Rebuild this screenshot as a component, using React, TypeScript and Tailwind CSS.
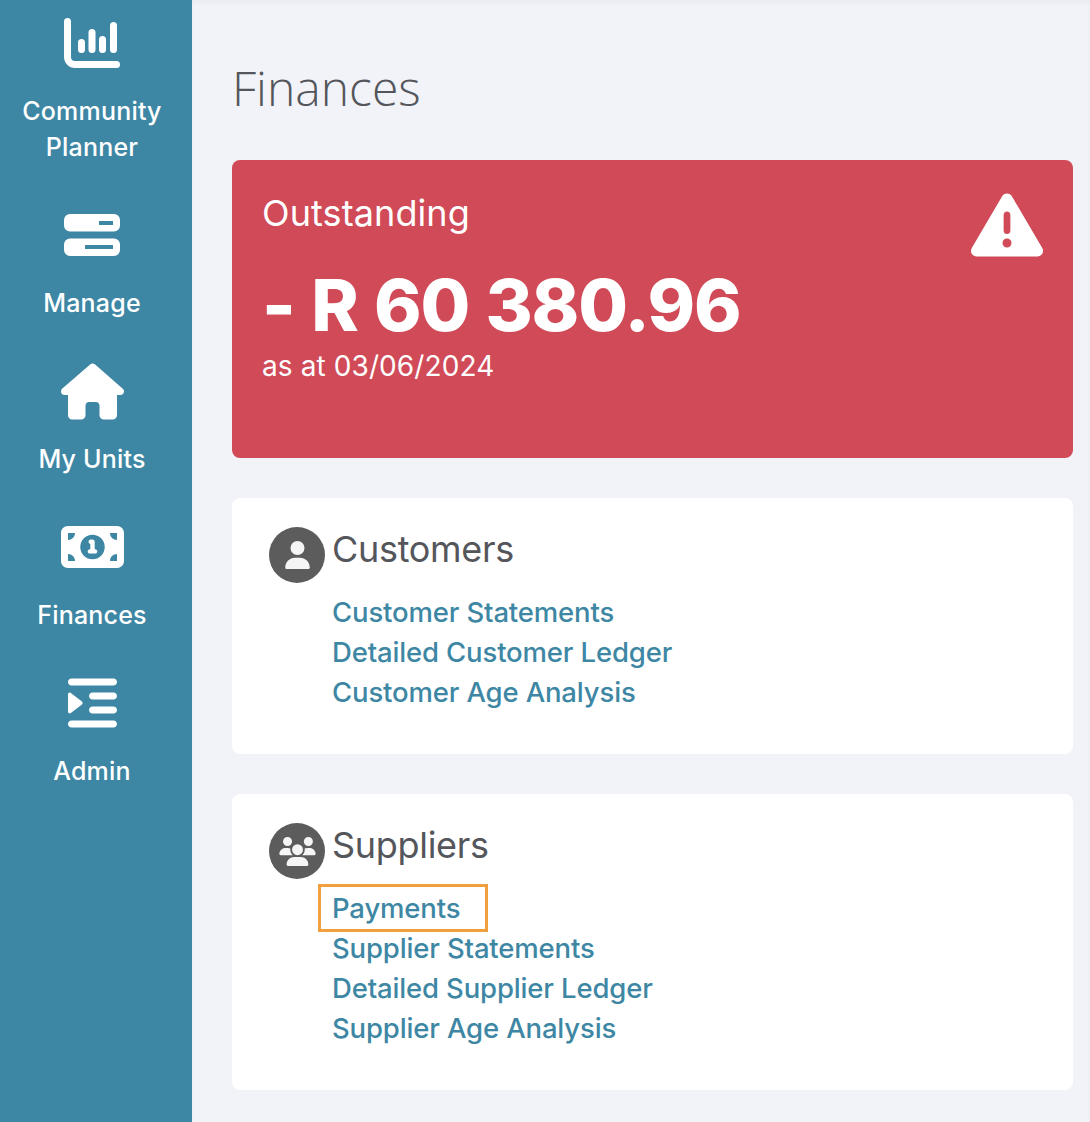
import { FaHouse, FaMoneyBill1, FaIndent, FaTriangleExclamation, FaUser, FaUsers } from "react-icons/fa6";
import type { ReactNode } from "react";

const F = { fontFamily: "Inter, 'Liberation Sans', sans-serif" };

function ChartIcon() {
  return (
    <svg width="56" height="50" viewBox="0 0 56 50" fill="white">
      <path d="M0 3.5a3.5 3.5 0 0 1 7 0V39a4 4 0 0 0 4 4h41.5a3.5 3.5 0 0 1 0 7H11A11 11 0 0 1 0 39Z" />
      <rect x="14" y="21" width="7" height="14" rx="3.5" />
      <rect x="24.500" y="11" width="7" height="24" rx="3.5" />
      <rect x="35" y="18" width="7" height="17" rx="3.5" />
      <rect x="46" y="4" width="7" height="31" rx="3.5" />
    </svg>
  );
}

function ManageIcon() {
  return (
    <svg width="56" height="42" viewBox="0 0 56 42" fill="white" fillRule="evenodd">
      <path d="M6 0h44a6 6 0 0 1 6 6v5.500a6 6 0 0 1-6 6H6a6 6 0 0 1-6-6V6a6 6 0 0 1 6-6ZM35 7v4h14V7Z" />
      <path d="M6 24.500h44a6 6 0 0 1 6 6V36a6 6 0 0 1-6 6H6a6 6 0 0 1-6-6v-5.500a6 6 0 0 1 6-6ZM21 31v4h28v-4Z" />
    </svg>
  );
}

function NavItem({ icon, children }: { icon: ReactNode; children: ReactNode }) {
  return (
    <div className="flex flex-col items-center">
      <div className="flex h-16 items-center justify-center text-white">{icon}</div>
      <div className="mt-[18px] text-center text-[25px] font-[450] leading-9 tracking-[0.2px] text-white">{children}</div>
    </div>
  );
}

function Section({ icon, title, links }: { icon: ReactNode; title: string; links: ReactNode[] }) {
  return (
    <section className="rounded-lg bg-white pb-[42px] pl-[37px] pt-[29px]">
      <div className="flex items-start gap-[7px]">
        <div className="flex h-14 w-14 items-center justify-center rounded-full bg-[#5c5c5c] text-[#f5f5f5]">{icon}</div>
        <h2 className="mt-[-5px] text-[36px] leading-[54px] tracking-[-0.3px] text-[#54565b]">{title}</h2>
      </div>
      <div className="ml-[63px] mt-[9px] flex flex-col">
        {links.map((l, i) => (
          <div key={i} className="relative text-[27.5px] font-[450] leading-10 tracking-[-0.15px] text-[#3e87a4]">{l}</div>
        ))}
      </div>
    </section>
  );
}

export default function App() {
  return (
    <div className="flex min-h-[1122px] bg-[#f1f3f8]" style={F}>
      <aside className="flex w-[192px] shrink-0 flex-col gap-[38px] bg-[#3e87a4] pr-2 pt-[11px]">
        <NavItem icon={<ChartIcon />}>Community<br />Planner</NavItem>
        <NavItem icon={<ManageIcon />}>Manage</NavItem>
        <NavItem icon={<FaHouse className="h-[57px] w-[63px]" />}>My Units</NavItem>
        <NavItem icon={<FaMoneyBill1 className="h-[56px] w-[63px]" />}>Finances</NavItem>
        <NavItem icon={<FaIndent className="h-[56px] w-[49px]" />}>Admin</NavItem>
      </aside>
      <main className="flex-1 pb-8 pl-10 pr-[17px] pt-[56px] shadow-[inset_0_3px_4px_rgba(0,0,0,0.03)]">
        <h1 className="mb-10 h-16 text-[48px] font-light leading-[64px] text-[#54565b]" style={{ fontFamily: "'Open Sans', sans-serif" }}>Finances</h1>
        <div className="flex flex-col gap-10">
          <section className="flex h-[298px] justify-between rounded-lg bg-[#d04a58] px-[30px] pt-[32px] text-white">
            <div>
              <div className="text-[36px] leading-[42px] tracking-[0.1px]">Outstanding</div>
              <div className="mt-[29px] text-[72px] font-[850] leading-[84px] tracking-[-1.25px] [word-spacing:2px]">- R 60 380.96</div>
              <div className="mt-[1px] text-[28px] leading-9 tracking-[0.1px]">as at 03/06/2024</div>
            </div>
            <FaTriangleExclamation className="mt-[-3px] h-[72px] w-[72px]" />
          </section>
          <Section
            icon={<FaUser className="h-7 w-[25px]" />}
            title="Customers"
            links={["Customer Statements", "Detailed Customer Ledger", "Customer Age Analysis"]}
          />
          <Section
            icon={<FaUsers className="h-[29px] w-[37px]" />}
            title="Suppliers"
            links={[
              <>
                Payments
                <span className="absolute left-[-14px] top-[-4px] h-12 w-[170px] border-[3px] border-[#f0a03c]" />
              </>,
              "Supplier Statements",
              "Detailed Supplier Ledger",
              "Supplier Age Analysis",
            ]}
          />
        </div>
      </main>
    </div>
  );
}
